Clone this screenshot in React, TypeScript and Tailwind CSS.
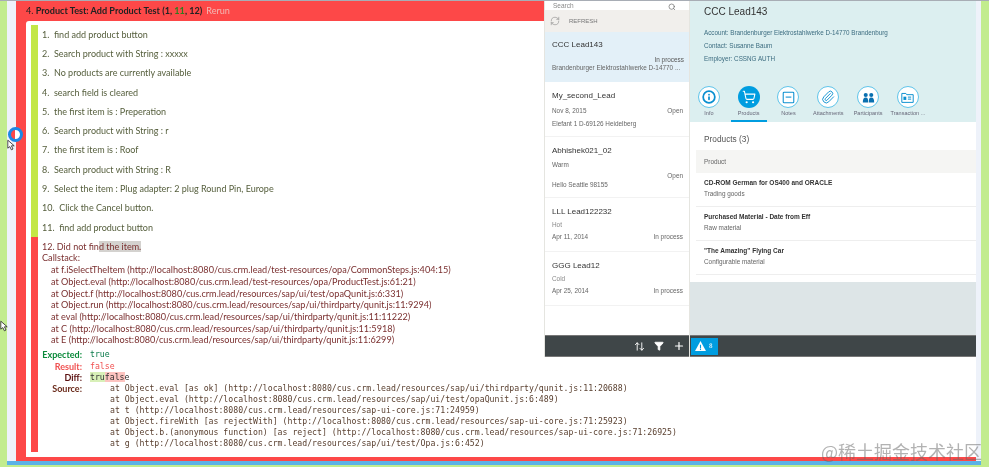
import { Info, ShoppingCart, Paperclip, Search, RefreshCw, Plus, Filter, ArrowUpDown } from 'lucide-react'

const steps = [
  '1.  find add product button',
  '2.  Search product with String : xxxxx',
  '3.  No products are currently available',
  '4.  search field is cleared',
  '5.  the first item is : Preperation',
  '6.  Search product with String : r',
  '7.  the first item is : Roof',
  '8.  Search product with String : R',
  '9.  Select the item : Plug adapter: 2 plug Round Pin, Europe',
  '10.  Click the Cancel button.',
  '11.  find add product button',
]

const callstack = [
  'at f.iSelectTheItem (http://localhost:8080/cus.crm.lead/test-resources/opa/CommonSteps.js:404:15)',
  'at Object.eval (http://localhost:8080/cus.crm.lead/test-resources/opa/ProductTest.js:61:21)',
  'at Object.f (http://localhost:8080/cus.crm.lead/resources/sap/ui/test/opaQunit.js:6:331)',
  'at Object.run (http://localhost:8080/cus.crm.lead/resources/sap/ui/thirdparty/qunit.js:11:9294)',
  'at eval (http://localhost:8080/cus.crm.lead/resources/sap/ui/thirdparty/qunit.js:11:11222)',
  'at C (http://localhost:8080/cus.crm.lead/resources/sap/ui/thirdparty/qunit.js:11:5918)',
  'at E (http://localhost:8080/cus.crm.lead/resources/sap/ui/thirdparty/qunit.js:11:6299)',
]

const source = [
  'at Object.eval [as ok] (http://localhost:8080/cus.crm.lead/resources/sap/ui/thirdparty/qunit.js:11:20688)',
  'at Object.eval (http://localhost:8080/cus.crm.lead/resources/sap/ui/test/opaQunit.js:6:489)',
  'at t (http://localhost:8080/cus.crm.lead/resources/sap-ui-core.js:71:24959)',
  'at Object.fireWith [as rejectWith] (http://localhost:8080/cus.crm.lead/resources/sap-ui-core.js:71:25923)',
  'at Object.b.(anonymous function) [as reject] (http://localhost:8080/cus.crm.lead/resources/sap-ui-core.js:71:26925)',
  'at g (http://localhost:8080/cus.crm.lead/resources/sap/ui/test/Opa.js:6:452)',
]

const stackedLeads = [
  { name: 'LLL Lead122232', tag: 'Hot', date: 'Apr 11, 2014' },
  { name: 'GGG Lead12', tag: 'Cold', date: 'Apr 25, 2014' },
]

const products = [
  { name: 'CD-ROM German for OS400 and ORACLE', type: 'Trading goods' },
  { name: 'Purchased Material - Date from Eff', type: 'Raw material' },
  { name: '"The Amazing" Flying Car', type: 'Configurable material' },
]

function NotesIcon() {
  return (
    <svg viewBox="0 0 16 16" className="h-[13px] w-[13px]" fill="none" stroke="#0a8fd0" strokeWidth="1.3">
      <rect x="1.5" y="1.5" width="13" height="13" rx="1" />
      <path d="M4.5 7.5h7" />
    </svg>
  )
}

function PeopleIcon() {
  return (
    <svg viewBox="0 0 16 16" className="h-[13px] w-[13px]" fill="#0a70b0">
      <circle cx="4.6" cy="5" r="2.5" />
      <circle cx="11.4" cy="5" r="2.5" />
      <path d="M1 14c0-4 1-6 3.6-6s3 2 3 6zM8.4 14c0-4 .4-6 3-6S15 10 15 14z" />
    </svg>
  )
}

function CardIcon() {
  return (
    <svg viewBox="0 0 16 16" className="h-[13px] w-[13px]" fill="none" stroke="#0a8fd0" strokeWidth="1.2">
      <path d="M1 3h5l1 1.5h8V14H1z" />
      <rect x="3" y="7" width="3.5" height="4" fill="#0a8fd0" stroke="none" />
      <path d="M8.5 7.5h4M8.5 10h4" />
    </svg>
  )
}

const tabs = [
  { label: 'Info', icon: <Info className="h-[14px] w-[14px] text-[#0a8fd0]" strokeWidth={3} /> },
  { label: 'Products', icon: <ShoppingCart className="h-[14px] w-[14px] text-white" strokeWidth={1.8} />, active: true },
  { label: 'Notes', icon: <NotesIcon /> },
  { label: 'Attachments', icon: <Paperclip className="h-[14px] w-[14px] text-[#0a8fd0]" strokeWidth={1.6} /> },
  { label: 'Participants', icon: <PeopleIcon /> },
  { label: 'Transaction ...', icon: <CardIcon /> },
]

function Cursor({ className }: { className: string }) {
  return (
    <svg viewBox="0 0 10 14" className={className} fill="#fff" stroke="#222" strokeWidth="1">
      <path d="M1 1v10l2.5-2 2 4 2-1-2-4H9z" />
    </svg>
  )
}

function LeadList() {
  return (
    <div className="flex w-[145px] shrink-0 flex-col border-l border-[#e5e5e0] bg-white font-['Liberation_Sans',sans-serif]">
      <div className="flex h-[9px] items-end justify-between overflow-hidden px-[8px] text-[6.5px] text-[#888]">
        <span className="-mb-[1px]">Search</span>
        <Search className="mr-[5px] -mb-[1px] h-[8px] w-[8px] text-[#666]" />
      </div>
      <div className="flex h-[22px] items-center gap-[9px] bg-[#f1efec] pl-[5px] text-[6px] text-[#777]">
        <RefreshCw className="h-[10px] w-[10px]" strokeWidth={1.2} />
        <span>REFRESH</span>
      </div>

      <div className="h-[50px] bg-[#e3f0f8] pl-[7px] pr-[5px] pt-[7px]">
        <div className="text-[8px] leading-[12px] text-[#333]">CCC Lead143</div>
        <div className="mt-[4px] text-right text-[6.4px] leading-[9px] text-[#555]">In process</div>
        <div className="-mt-px truncate text-[6.4px] leading-[10px] text-[#666]">Brandenburger Elektrostahlwerke D-14770 ...</div>
      </div>

      <div className="h-[55px] border-b border-[#f2f2f2] pl-[7px] pr-[6px] pt-[8px]">
        <div className="text-[8px] leading-[12px] text-[#333]">My_second_Lead</div>
        <div className="mt-[4px] flex justify-between text-[6.4px] leading-[9px] text-[#666]">
          <span>Nov 8, 2015</span>
          <span>Open</span>
        </div>
        <div className="mt-[4px] text-[6.4px] leading-[10px] text-[#666]">Elefant 1 D-69126 Heidelberg</div>
      </div>

      <div className="h-[61px] border-b border-[#f2f2f2] pl-[7px] pr-[6px] pt-[8px]">
        <div className="text-[8px] leading-[12px] text-[#333]">Abhishek021_02</div>
        <div className="mt-[3px] text-[6.4px] leading-[9px] text-[#666]">Warm</div>
        <div className="mt-[2px] text-right text-[6.4px] leading-[9px] text-[#666]">Open</div>
        <div className="text-[6.4px] leading-[10px] text-[#666]">Hello Seattle 98155</div>
      </div>

      {stackedLeads.map((lead) => (
        <div key={lead.name} className="h-[54px] border-b border-[#f2f2f2] pl-[7px] pr-[6px] pt-[8px]">
          <div className="text-[8px] leading-[12px] text-[#333]">{lead.name}</div>
          <div className="mt-[2px] text-[6.4px] leading-[9px] text-[#888]">{lead.tag}</div>
          <div className="mt-[3px] flex justify-between text-[6.4px] leading-[9px] text-[#666]">
            <span>{lead.date}</span>
            <span>In process</span>
          </div>
        </div>
      ))}

      <div className="flex-1 bg-white" />
      <div className="flex h-[22px] items-center justify-end gap-[9px] border-y border-[#777] bg-[#3f4648] pr-[4px] text-white">
        <ArrowUpDown className="h-[11px] w-[11px]" strokeWidth={2} />
        <Filter className="h-[10px] w-[10px]" fill="white" />
        <Plus className="h-[12px] w-[12px]" strokeWidth={2.4} />
      </div>
    </div>
  )
}

function Detail() {
  return (
    <div className="flex min-w-0 flex-1 flex-col border-l border-[#e5e5e0] bg-white font-['Liberation_Sans',sans-serif]">
      <div className="h-[121px] bg-[#dceff0]">
        <div className="pl-[14px] pt-[4px]">
          <div className="text-[10px] leading-[14px] text-[#333]">CCC Lead143</div>
          <div className="mt-[6.5px] text-[6.3px] leading-[13px] text-[#3d6d80]">
            <div>Account: Brandenburger Elektrostahlwerke D-14770 Brandenburg</div>
            <div>Contact: Susanne Baum</div>
            <div>Employer: CSSNG AUTH</div>
          </div>
        </div>
        <div className="-ml-px mt-[21.5px] flex">
          {tabs.map((tab) => (
            <div key={tab.label} className="flex w-[39.8px] flex-col items-center">
              <div
                className={
                  tab.active
                    ? 'flex h-[22px] w-[22px] items-center justify-center rounded-full bg-[#009de0]'
                    : 'flex h-[22px] w-[22px] items-center justify-center rounded-full border border-[#5fc4ea] bg-white'
                }
              >
                {tab.icon}
              </div>
              <div className="mt-[1px] whitespace-nowrap text-[5.5px] leading-[9px] text-[#667]">{tab.label}</div>
              <div className={tab.active ? 'mt-[2px] h-[2px] w-[36px] bg-[#009de0]' : 'mt-[2px] h-[2px]'} />
            </div>
          ))}
        </div>
      </div>

      <div className="h-[160px] pl-[6px]">
        <div className="pl-[8px] pt-[11px] text-[8.3px] leading-[13px] text-[#555]">Products (3)</div>
        <div className="mt-[4px] flex h-[23px] items-center bg-[#f5f5f3] pl-[8px] text-[6.4px] text-[#666]">Product</div>
        {products.map((p) => (
          <div key={p.name} className="h-[34px] border-b border-[#eeeeee] pl-[8px] pt-[4px]">
            <div className="text-[6.5px] font-bold leading-[11px] text-[#333]">{p.name}</div>
            <div className="text-[6.4px] leading-[12px] text-[#666]">{p.type}</div>
          </div>
        ))}
      </div>

      <div className="flex-1 bg-[#dde5e7]" />
      <div className="flex h-[22px] items-center border-y border-[#777] bg-[#3f4648] pl-[1px]">
        <div className="flex h-[17px] w-[27px] items-center gap-[3px] bg-[#009de0] pl-[4px]">
          <svg viewBox="0 0 12 11" className="h-[10px] w-[11px]">
            <path d="M6 0l6 11H0z" fill="#fff" />
            <path d="M5.4 4h1.2v4H5.4zM5.4 8.6h1.2v1.2H5.4z" fill="#009de0" />
          </svg>
          <span className="font-['DejaVu_Sans_Mono',monospace] text-[6px] leading-none text-white">8</span>
        </div>
      </div>
    </div>
  )
}

export default function App() {
  return (
    <div className="relative h-[467px] w-[989px] overflow-hidden bg-[#c2ec8e] blur-[0.3px]">
      <div className="h-px bg-[#a8adb5]" />
      <div className="ml-[7px] mr-[8px] h-[464px] border-b-[4px] border-[#5cb2e6] bg-[#eef2fa] pl-[9px] pr-[5px]">
        <div className="flex h-[460px] flex-col bg-[#fd4848] pb-[4px] pl-[10px] font-['Lato',sans-serif]">
          <div className="flex h-[20px] shrink-0 items-center gap-[4px] text-[9.1px] text-[#222]">
            <span className="font-bold">
              <span className="font-normal">4. </span>
              Product Test: Add Product Test (1, <span className="text-[#2f7d1e]">11</span>, 12)
            </span>
            <span className="text-[#f2b9b5]">Rerun</span>
          </div>

          <div className="flex-1 rounded-tl-[3px] bg-white pl-[5px] pt-[4px]">
            <ol className="h-[427px]">
              {steps.map((s) => (
                <li key={s} className="flex h-[19.27px] items-center whitespace-pre border-l-[7px] border-[#c3e746] pl-[4px] text-[9px] text-[#555e3c]">
                  {s}
                </li>
              ))}
              <li className="h-[215px] border-l-[7px] border-[#fd4848] pl-[4px] text-[9px] text-[#7a2f2f]">
                <div className="pt-[3.5px] leading-[13px]">
                  12. Did not fin<span className="bg-[#d4d2cf]">d the item.</span>
                </div>
                <div className="mt-[-1px] text-[9.13px] leading-[11.67px]">
                  <div className="leading-[12px]">Callstack:</div>
                  {callstack.map((line) => (
                    <div key={line} className="whitespace-nowrap pl-[9px]">{line}</div>
                  ))}
                </div>
                <div className="mt-[3px] grid grid-cols-[40px_1fr] gap-x-[8px] text-[9px] leading-[11.4px]">
                  <div className="text-right font-bold text-[#0a8a3a]">Expected:</div>
                  <div className="font-['DejaVu_Sans_Mono',monospace] text-[8.2px] text-[#0a7a4a]">true</div>
                  <div className="text-right font-bold text-[#f05050]">Result:</div>
                  <div className="font-['DejaVu_Sans_Mono',monospace] text-[8.2px] text-[#f05050]">false</div>
                  <div className="text-right font-bold text-[#5a1010]">Diff:</div>
                  <div className="font-['DejaVu_Sans_Mono',monospace] text-[8.2px] text-[#333]">
                    <span className="bg-[#d8f0b8]">tru</span>
                    <span className="bg-[#fcc4c0]">fals</span>e
                  </div>
                  <div className="text-right font-bold text-[#6a2a1a]">Source:</div>
                  <div className="pl-[20px] font-['DejaVu_Sans_Mono',monospace] text-[8.2px] leading-[10.85px] text-[#5a4030]">
                    {source.map((line) => (
                      <div key={line} className="whitespace-nowrap">{line}</div>
                    ))}
                  </div>
                </div>
              </li>
            </ol>
          </div>
        </div>
      </div>

      {/* app under test, sits over the qunit report */}
      <div className="absolute left-[544px] top-px flex h-[356px] w-[432px] overflow-hidden">
        <LeadList />
        <Detail />
      </div>

      {/* busy indicator and mouse pointers caught in the capture */}
      <div className="absolute left-[8px] top-[127px] h-[15px] w-[15px] rounded-full border-[3px] border-[#1e88e5] bg-[linear-gradient(90deg,#fd4848_50%,#fff_50%)]" />
      <Cursor className="absolute left-[7px] top-[139px] h-[12px] w-[8px]" />
      <Cursor className="absolute left-0 top-[320px] h-[12px] w-[8px]" />

      <div className="absolute bottom-[3px] right-[7px] whitespace-nowrap font-['Noto_Sans_CJK_SC',sans-serif] text-[18px] leading-[26px] text-[#666]/50">
        @稀土掘金技术社区
      </div>
    </div>
  )
}
